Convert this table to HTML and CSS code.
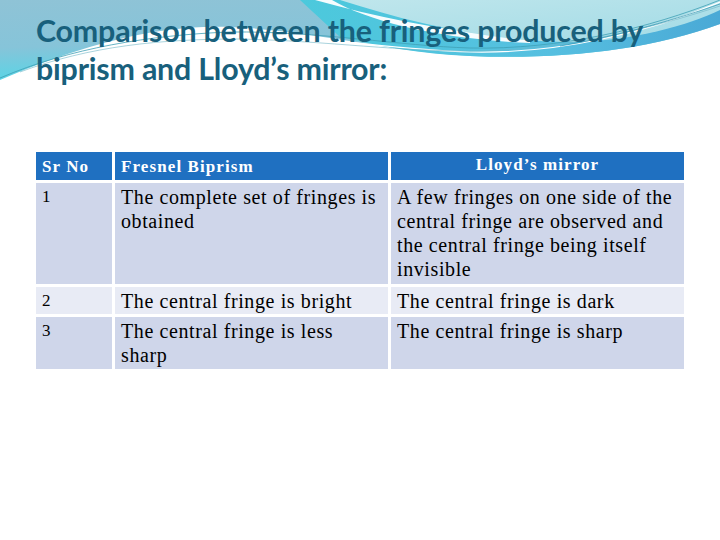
FILE: index.html
```html
<!DOCTYPE html>
<html>
<head>
<meta charset="utf-8">
<link rel="stylesheet" href="styles.css">
</head>
<body>
<div class="slide">
  <svg class="deco" width="720" height="100" viewBox="0 0 720 100" xmlns="http://www.w3.org/2000/svg">
    <defs>
      <linearGradient id="gBlue" x1="0" y1="0" x2="0.3" y2="1">
        <stop offset="0" stop-color="#8fc3d6"/>
        <stop offset="0.55" stop-color="#86c4d9"/>
        <stop offset="1" stop-color="#52d8e8"/>
      </linearGradient>
      <linearGradient id="gRight" x1="0" y1="0" x2="1" y2="0">
        <stop offset="0" stop-color="#4cc9dc"/>
        <stop offset="0.6" stop-color="#56bfe0"/>
        <stop offset="1" stop-color="#4aa9d6"/>
      </linearGradient>
      <linearGradient id="gLight" x1="0" y1="0" x2="1" y2="1">
        <stop offset="0" stop-color="#bfe6ec"/>
        <stop offset="1" stop-color="#a2dbe6"/>
      </linearGradient>
    </defs>
    <path d="M0,0 H720 V24 C650,50 560,60 470,56 C390,52 310,30 230,27 C150,24 70,50 0,80 Z" fill="url(#gBlue)"/>
    <path d="M300,0 H720 V24 C650,50 560,60 470,56 C420,54 380,46 340,37 Z" fill="url(#gRight)"/>
    <path d="M315,0 C380,18 450,32 530,39 L530,43 C440,39 370,22 332,0 Z" fill="#ffffff" opacity="0.95"/>
    <path d="M340,0 C410,22 480,40 565,42 C635,42 690,24 720,10 V0 Z" fill="url(#gLight)"/>
    <path d="M0,82 C70,50 150,37 230,35 C320,35 390,50 470,52 C560,54 650,32 720,2" fill="none" stroke="#ffffff" stroke-width="1.2"/>
    <path d="M0,78 C70,48 150,35 230,32 C320,31 400,46 470,48 C560,50 650,28 720,0" fill="none" stroke="#3f9fb5" stroke-width="0.8"/>
    <path d="M20,72 C90,46 160,39 240,39 C330,41 400,52 480,51 C570,49 660,26 720,6" fill="none" stroke="#6fb6c6" stroke-width="0.6"/>
    <path d="M560,46 C620,36 680,18 720,4" fill="none" stroke="#2e92ad" stroke-width="0.7"/>
  </svg>
  <h1 class="title">Comparison between the fringes produced by<br>biprism and Lloyd’s mirror:</h1>
  <div class="table">
    <div class="cell head">Sr No</div>
    <div class="cell head">Fresnel Biprism</div>
    <div class="cell head center">Lloyd’s mirror</div>

    <div class="cell dark num">1</div>
    <div class="cell dark">The complete set of fringes is<br>obtained</div>
    <div class="cell dark">A few fringes on one side of the<br>central fringe are observed and<br>the central fringe being itself<br>invisible</div>

    <div class="cell light num">2</div>
    <div class="cell light">The central fringe is bright</div>
    <div class="cell light">The central fringe is dark</div>

    <div class="cell dark num">3</div>
    <div class="cell dark">The central fringe is less<br>sharp</div>
    <div class="cell dark">The central fringe is sharp</div>
  </div>
</div>
</body>
</html>
```

FILE: styles.css
```css
html, body {
  margin: 0;
  padding: 0;
  background: #ffffff;
}
.slide {
  position: relative;
  width: 720px;
  height: 540px;
  overflow: hidden;
  background: #ffffff;
}
.deco {
  position: absolute;
  left: 0;
  top: 0;
  z-index: 0;
}
.title {
  position: relative;
  z-index: 1;
  margin: 0;
  padding: 11px 0 0 36px;
  font-family: Lato, "Open Sans", sans-serif;
  font-weight: bold;
  font-size: 30.4px;
  line-height: 38px;
  color: #18607c;
  letter-spacing: -0.2px;
}
.table {
  position: relative;
  z-index: 1;
  display: grid;
  grid-template-columns: 76px 273px 293px;
  grid-template-rows: 28px 101px 27px 52px;
  gap: 3px;
  margin: 65px 0 0 36px;
  width: 648px;
  font-family: "Liberation Serif", "Times New Roman", serif;
  font-size: 20px;
  letter-spacing: 0.6px;
  line-height: 24px;
  color: #000000;
}
.cell {
  padding: 2px 2px 0 6px;
}
.head {
  background: #1f70c1;
  color: #ffffff;
  font-weight: bold;
  font-size: 17px;
  letter-spacing: 1.1px;
  line-height: 24px;
  padding: 3px 6px 0 6px;
}
.head.center {
  text-align: center;
  padding-top: 1px;
}
.dark {
  background: #cfd6ea;
}
.light {
  background: #e8ebf5;
}
.num {
  font-size: 17px;
}
```
